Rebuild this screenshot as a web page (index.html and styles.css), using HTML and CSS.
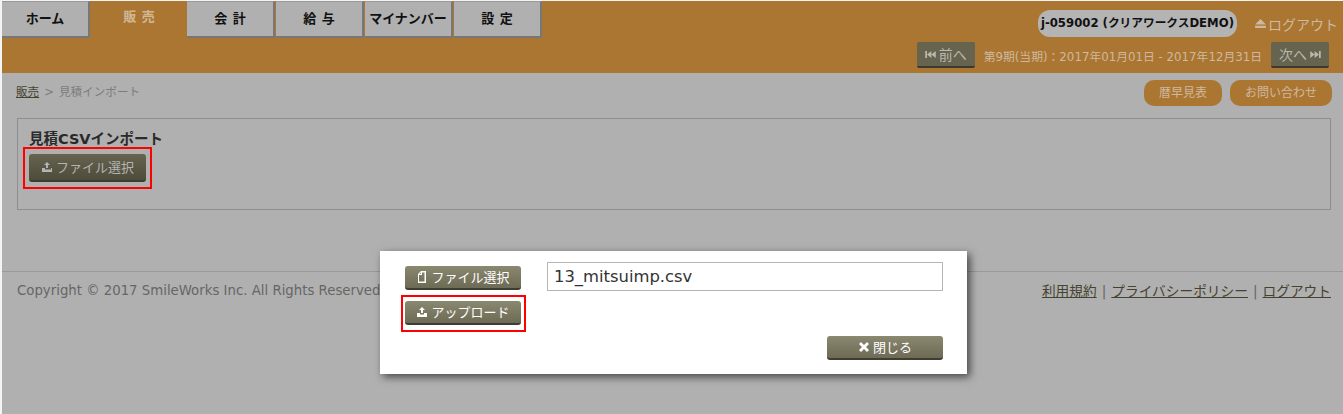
FILE: index.html
```html
<!DOCTYPE html>
<html lang="ja">
<head>
  <meta charset="UTF-8" />
  <title>見積インポート</title>
  <link rel="stylesheet" href="styles.css">
</head>
<body>
  <div class="page">
    <header class="header">
      <nav class="tabs">
        <a class="tab">ホーム</a>
        <a class="tab active">販 売</a>
        <a class="tab">会 計</a>
        <a class="tab">給 与</a>
        <a class="tab">マイナンバー</a>
        <a class="tab">設 定</a>
      </nav>
      <div class="header-right">
        <div class="user-row">
          <span class="user-badge">j-059002 (クリアワークスDEMO)</span>
          <a class="logout">
            <svg class="eject" viewBox="0 0 12 10"><path d="M6 0 12 6H0zM0 7.500h12V10H0z"/></svg>ログアウト
          </a>
        </div>
        <div class="term-row">
          <a class="term-btn">
            <svg class="skip" viewBox="0 0 12 8"><path d="M0 0h2v8H0zM7 0v8L2 4zM12 0v8L7 4z"/></svg>前へ
          </a>
          <span class="term-text">第9期(当期)：2017年01月01日 - 2017年12月31日</span>
          <a class="term-btn">次へ
            <svg class="skip" viewBox="0 0 12 8"><path d="M0 0v8l5-4zM5 0v8l5-4zM10 0h2v8h-2z"/></svg>
          </a>
        </div>
      </div>
    </header>

    <div class="sub-row">
      <div class="breadcrumb"><a>販売</a><span class="crumb-sep">&gt;</span>見積インポート</div>
      <div class="shortcuts">
        <a class="pill">暦早見表</a>
        <a class="pill">お問い合わせ</a>
      </div>
    </div>

    <section class="panel">
      <h2>見積CSVインポート</h2>
      <div class="marked">
        <a class="btn btn-dark">
          <svg class="icon" viewBox="0 0 12 12"><path d="M6 1 9 4H7v3H5V4H3zM1 7h3v1.500h6V7h1v4H1z"/></svg>ファイル選択
        </a>
      </div>
    </section>

    <footer class="footer">
      <span class="copyright">Copyright © 2017 SmileWorks Inc. All Rights Reserved.</span>
      <span class="footer-links"><a>利用規約</a><span class="link-sep">|</span><a>プライバシーポリシー</a><span class="link-sep">|</span><a>ログアウト</a></span>
    </footer>
  </div>

  <div class="modal">
    <div class="modal-left">
      <a class="btn">
        <svg class="icon" viewBox="0 0 12 12"><path d="M5 0h5v12H2V3zM5 1.500 3.500 3H5zM6 1.500V4H3v6.500h5.500v-9z"/></svg>ファイル選択
      </a>
      <div class="marked">
        <a class="btn">
          <svg class="icon" viewBox="0 0 12 12"><path d="M6 1 9 4H7v3H5V4H3zM1 7h3v1.500h4V7h3v4H1z"/></svg>アップロード
        </a>
      </div>
    </div>
    <div class="modal-right">
      <div class="file-name">13_mitsuimp.csv</div>
      <a class="btn btn-close">
        <svg class="icon" viewBox="0 0 12 12"><path d="M3 1 6 4 9 1l2 2-3 3 3 3-2 2-3-3-3 3-2-2 3-3-3-3z"/></svg>閉じる
      </a>
    </div>
  </div>
</body>
</html>
```

FILE: styles.css
```css
* {
  box-sizing: border-box;
}

body {
  margin: 0;
  height: 414px;
  overflow: hidden;
  background-color: #f4f4f4;
  font-family: "DejaVu Sans", "Noto Sans CJK JP", sans-serif;
  font-size: 13px;
}

.page {
  margin: 1px 0 0 2px;
  height: 413px;
  background-color: #b0b0b0;
}

.header {
  display: flex;
  justify-content: space-between;
  height: 72px;
  background-color: #ab7632;
}

.tabs {
  display: flex;
  align-items: flex-start;
}

.tab {
  width: 88px;
  height: 37px;
  margin-right: 1px;
  padding-bottom: 3px;
  display: flex;
  align-items: center;
  justify-content: center;
  background-color: #b0b0b0;
  border-top: 1px solid #999;
  border-right: 2px solid #777;
  border-bottom: 2px solid #777;
  color: #111;
  font-size: 13px;
  font-weight: bold;
  word-spacing: 1px;
}

.tab.active {
  width: 96px;
  margin-right: 0;
  padding-bottom: 9px;
  background-color: #ab7632;
  border: none;
  color: #d0b896;
}

.header-right {
  flex: none;
  width: 420px;
  padding-top: 9px;
  display: flex;
  flex-direction: column;
  gap: 5px;
}

.user-row {
  display: flex;
  align-items: center;
  justify-content: flex-end;
  margin-right: 5px;
}

.user-badge {
  height: 27px;
  line-height: 27px;
  padding: 0 3px;
  border-radius: 12px;
  background-color: #b4b4b4;
  color: #111;
  font-size: 11.7px;
  font-weight: bold;
  white-space: nowrap;
}

.logout {
  display: flex;
  align-items: center;
  margin-left: 18px;
  color: #cdb99f;
  font-size: 14px;
  white-space: nowrap;
}

.eject {
  width: 11px;
  height: 9px;
  margin-right: 2px;
  fill: #cdb99f;
}

.term-row {
  display: flex;
  align-items: center;
  justify-content: flex-end;
  margin-right: 14px;
  white-space: nowrap;
}

.term-btn {
  flex: none;
  width: 58px;
  height: 26px;
  display: flex;
  align-items: center;
  justify-content: center;
  gap: 3px;
  background-color: #66634f;
  border-bottom: 2px solid #3c3a2e;
  border-radius: 2px;
  color: #b8b8ae;
  font-size: 14px;
}

.skip {
  width: 11px;
  height: 7px;
  fill: #b8b8ae;
}

.term-text {
  margin: 0 9px;
  color: #cdb99f;
  font-size: 11.8px;
}

.sub-row {
  display: flex;
  justify-content: space-between;
  padding: 7px 11px 0 14px;
}

.breadcrumb {
  padding-top: 3px;
  color: #7c7c7c;
  font-size: 11.6px;
}

.breadcrumb a {
  color: #45432f;
  text-decoration: underline;
}

.crumb-sep {
  margin: 0 5px;
}

.shortcuts {
  display: flex;
  gap: 8px;
}

.pill {
  height: 26px;
  line-height: 26px;
  padding: 0 15px;
  border-radius: 10px;
  background-color: #ab7632;
  color: #cdb99f;
  font-size: 12px;
}

.panel {
  height: 92px;
  margin: 12px 12px 0 15px;
  padding: 13px 11px 0;
  border: 1px solid #8e8e8e;
}

.panel h2 {
  margin: 0;
  color: #2a2a2a;
  font-size: 14.5px;
  line-height: 15px;
  font-weight: bold;
}

.marked {
  width: 129px;
  margin-left: -6px;
  padding: 5px 4px;
  border: 2px solid #f00;
}

.btn {
  height: 24px;
  padding-bottom: 1px;
  display: flex;
  align-items: center;
  justify-content: center;
  gap: 3px;
  background-image: linear-gradient(#8b8870, #6d6a55);
  border-bottom: 2px solid #3f3d30;
  border-radius: 3px;
  color: #fff;
  font-size: 13px;
}

.btn-dark {
  height: 28px;
  background-image: linear-gradient(#66634f, #4e4c3a);
  color: #b4b4b4;
}

.btn-dark .icon {
  fill: #b4b4b4;
}

.icon {
  width: 12px;
  height: 12px;
  fill: #fff;
}

.footer {
  display: flex;
  justify-content: space-between;
  margin-top: 61px;
  padding: 9px 12px 0 15px;
  border-top: 1px solid #999;
  line-height: 20px;
}

.copyright {
  color: #666;
  font-size: 13.3px;
}

.footer-links {
  color: #666;
  font-size: 13.7px;
}

.footer-links a {
  color: #45432f;
  text-decoration: underline;
}

.link-sep {
  margin: 0 5px;
}

.modal {
  position: absolute;
  left: 380px;
  top: 251px;
  width: 587px;
  height: 123px;
  padding: 11px 24px 0 21px;
  display: flex;
  gap: 21px;
  background-color: #fff;
  box-shadow: 3px 3px 8px rgba(0, 0, 0, 0.6);
}

.modal-left {
  width: 125px;
  padding: 4px 0 0 4px;
}

.modal-left > .btn {
  width: 116px;
  margin-bottom: 5px;
}

.modal-left .marked {
  width: 125px;
  margin-left: -4px;
  padding: 4px 3px 5px 2px;
}

.modal-right {
  flex: 1;
  display: flex;
  flex-direction: column;
  align-items: flex-end;
}

.file-name {
  width: 100%;
  height: 29px;
  line-height: 27px;
  padding-left: 6px;
  border: 1px solid #b5b5b5;
  color: #333;
  font-size: 16.4px;
}

.btn-close {
  width: 116px;
  margin-top: 45px;
}
```
